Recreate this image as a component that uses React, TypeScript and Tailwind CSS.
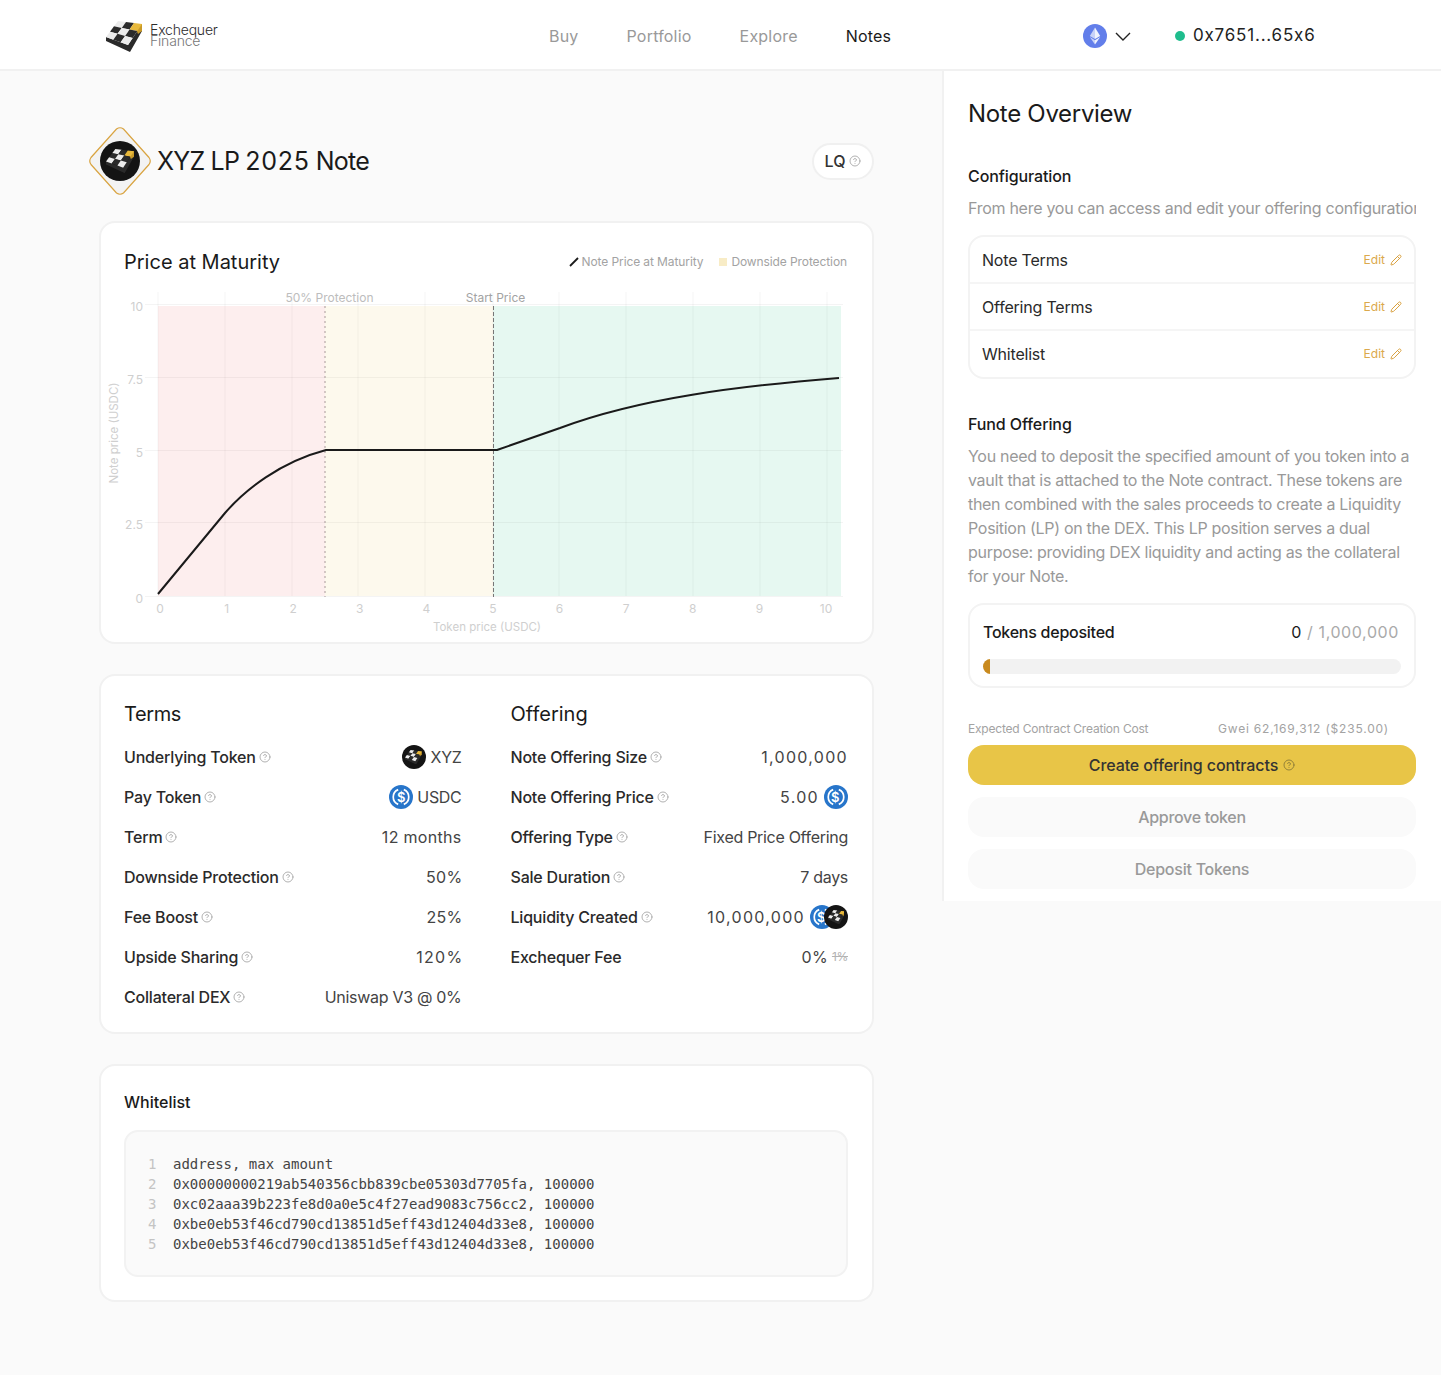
import { CircleHelp, Pencil } from "lucide-react";

const font = { fontFamily: "Inter, 'Liberation Sans', sans-serif" };

// board corners, then a 3x3 grid bent between them
const lerp = (a: number[], b: number[], t: number) => [a[0] + (b[0] - a[0]) * t, a[1] + (b[1] - a[1]) * t];
const T = [12, 0];
const R = [36, 3];
const L = [0, 16];
const F = [22, 24];
const pt = (u: number, v: number) => {
  const p = lerp(T, R, u);
  const q = lerp(L, F, u);
  return lerp(p, q, v).map((n) => n.toFixed(2)).join(",");
};

function Logo({ className }: { className?: string }) {
  const cells = [];
  for (let i = 0; i < 3; i++) {
    for (let j = 0; j < 3; j++) {
      const gold = i === 2 && j === 0;
      const fill = gold ? "#e8b93c" : (i + j) % 2 === 0 ? "#ececec" : "#2b2b2b";
      cells.push(
        <polygon
          key={`${i}${j}`}
          points={`${pt(i / 3, j / 3)} ${pt((i + 1) / 3, j / 3)} ${pt((i + 1) / 3, (j + 1) / 3)} ${pt(i / 3, (j + 1) / 3)}`}
          fill={fill}
        />
      );
    }
  }
  return (
    <svg viewBox="0 0 36 31" className={className}>
      <polygon points="0,16 22,24 36,3 36,10 24,31 0,20" fill="#2a2a2a" />
      <polygon points="28,3 36,3 36,10 32,13" fill="#c99a28" />
      {cells}
    </svg>
  );
}

function XyzToken({ className }: { className?: string }) {
  return (
    <span className={`flex shrink-0 items-center justify-center rounded-full bg-[#141414] ${className}`}>
      <Logo className="w-[70%]" />
    </span>
  );
}

function Usdc({ className }: { className?: string }) {
  return (
    <svg viewBox="0 0 24 24" className={className}>
      <circle cx="12" cy="12" r="12" fill="#2775ca" />
      <path d="M9.2 4.6a8 8 0 0 0 0 14.8M14.8 4.6a8 8 0 0 1 0 14.8" fill="none" stroke="#fff" strokeWidth="1.7" />
      <text x="12" y="16.5" textAnchor="middle" fontSize="13" fontWeight="600" fill="#fff" style={font}>$</text>
    </svg>
  );
}

function Help({ className = "" }: { className?: string }) {
  return <CircleHelp strokeWidth={1.8} className={`h-3 w-3 shrink-0 text-[#a8a8a8] ${className}`} />;
}

function Row({ label, help = true, num = false, children }: { label: string; help?: boolean; num?: boolean; children: React.ReactNode }) {
  return (
    <div className="flex h-10 items-center justify-between">
      <div className="flex items-center gap-[3px] text-[16px] font-medium tracking-[-0.2px] text-[#2a2a2a]">
        {label}
        {help && <Help />}
      </div>
      <div className={`flex items-center text-[16px] text-[#444444] ${num ? "tracking-[1.3px]" : "tracking-[-0.3px]"}`}>{children}</div>
    </div>
  );
}

function Chart() {
  const xs = [158, 225, 292, 358, 425, 493, 559, 626, 693, 760, 827];
  const ys = [
    [305, "10"],
    [378, "7.5"],
    [451, "5"],
    [523, "2.5"],
    [597, "0"],
  ] as const;
  return (
    <svg viewBox="101 284 770 356" className="mt-[9px] -ml-[23px] block w-[770px] max-w-none" style={font}>
      <rect x="158" y="306" width="167" height="290" fill="#fdeeee" />
      <rect x="325" y="306" width="168" height="290" fill="#fdf9ed" />
      <rect x="493" y="306" width="348" height="290" fill="#e6f8f1" />
      {xs.map((x) => (
        <line key={x} x1={x} x2={x} y1="292" y2="596" stroke="#000" strokeOpacity="0.045" />
      ))}
      {ys.map(([y]) => (
        <line key={y} x1="145" x2="843" y1={y - 0.5} y2={y - 0.5} stroke="#000" strokeOpacity="0.045" />
      ))}
      <line x1="325" x2="325" y1="306" y2="597" stroke="#a89a9a" strokeDasharray="2 3" />
      <line x1="493.5" x2="493.5" y1="306" y2="597" stroke="#777" strokeDasharray="4 2" />
      <path
        d="M158 594 L225 513 C245 490 280 462 326 450 L497 450 L560 428 C640 398 740 386 839 378"
        fill="none"
        stroke="#1a1a1a"
        strokeWidth="2"
        strokeLinejoin="round"
      />
      <g fontSize="12" fill="#cfcfcf">
        {ys.map(([y, t]) => (
          <text key={t} x="143" y={y + 6} textAnchor="end">{t}</text>
        ))}
        {xs.map((x, i) => (
          <text key={x} x={160 + i * 66.6} y="613" textAnchor="middle">{i}</text>
        ))}
        <text x="487" y="631" textAnchor="middle" fontSize="11.5">Token price (USDC)</text>
        <text transform="translate(118 433) rotate(-90)" textAnchor="middle" fontSize="11.5">Note price (USDC)</text>
        <text x="329.5" y="302" textAnchor="middle" fill="#bdbdbd">50% Protection</text>
        <text x="495.5" y="302" textAnchor="middle" fill="#a3a3a3">Start Price</text>
      </g>
    </svg>
  );
}

const codeLines = [
  "address, max amount",
  "0x00000000219ab540356cbb839cbe05303d7705fa, 100000",
  "0xc02aaa39b223fe8d0a0e5c4f27ead9083c756cc2, 100000",
  "0xbe0eb53f46cd790cd13851d5eff43d12404d33e8, 100000",
  "0xbe0eb53f46cd790cd13851d5eff43d12404d33e8, 100000",
];

export default function App() {
  return (
    <div className="min-h-[1375px] bg-[#fafafa] text-[#1a1a1a]" style={font}>
      {/* header */}
      <header className="flex h-[71px] items-center border-b-2 border-[#f1f1f1] bg-white pt-[3px]">
        <div className="flex w-[549px] items-center pl-[106px]">
          <Logo className="w-9" />
          <div className="ml-2 -mt-[2px] text-[14px] leading-[11px] font-light tracking-[-0.2px]">
            <div className="text-[#2c2c2c]">Exchequer</div>
            <div className="text-[#777777]">Finance</div>
          </div>
        </div>
        <nav className="flex w-[341px] gap-12 text-[16px] tracking-[0.2px] text-[#999999]">
          <span>Buy</span>
          <span>Portfolio</span>
          <span>Explore</span>
          <span className="text-[#1a1a1a]">Notes</span>
        </nav>
        <svg viewBox="0 0 24 24" className="ml-[193px] h-6 w-6">
          <circle cx="12" cy="12" r="12" fill="#627eea" />
          <polygon points="12,3.5 6.8,12 12,15" fill="#fff" fillOpacity="0.65" />
          <polygon points="12,3.5 17.2,12 12,15" fill="#fff" fillOpacity="0.9" />
          <polygon points="6.8,13 12,20.5 12,16.2" fill="#fff" fillOpacity="0.65" />
          <polygon points="17.2,13 12,20.5 12,16.2" fill="#fff" fillOpacity="0.9" />
        </svg>
        <svg viewBox="0 0 16 9" className="ml-2 h-[9px] w-4">
          <polyline points="1,1 8,8 15,1" fill="none" stroke="#222222" strokeWidth="1.4" />
        </svg>
        <span className="ml-[44px] h-[10px] w-[10px] rounded-full bg-[#1fbd8d]" />
        <span className="ml-2 text-[17px] tracking-[0.8px] text-[#222222]">0x7651...65x6</span>
      </header>

      <div className="flex items-start">
        {/* left column */}
        <main className="w-[942px] shrink-0 pl-[99px] pr-[68px] pt-[56px]">
          <div className="mb-[26px] flex h-[68px] items-center justify-between">
            <div className="-ml-[11px] flex items-center gap-[5px]">
              <span className="relative flex h-[68px] w-[64px] items-center justify-center">
                <svg viewBox="0 0 64 68" className="absolute inset-0">
                  <path
                    d="M28.5 2 Q32 -0.5 35.5 2 L61 30.5 Q63.5 34 61 37.5 L35.5 66 Q32 68.5 28.5 66 L3 37.5 Q0.5 34 3 30.5 Z"
                    fill="#f3f3f3"
                    stroke="#d9a441"
                    strokeWidth="1.2"
                  />
                </svg>
                <XyzToken className="relative h-10 w-10" />
              </span>
              <h1 className="mt-[2px] text-[25px] font-normal tracking-[-0.8px] text-[#1a1a1a]">
                XYZ LP <span className="tracking-[0.7px]">2025</span> Note
              </h1>
            </div>
            <div className="flex h-[37px] w-[62px] items-center justify-center gap-1 rounded-full border-2 border-[#f0f0f0] bg-white text-[16px] font-medium text-[#333333]">
              LQ <Help />
            </div>
          </div>

          <section className="h-[423px] rounded-[16px] border-2 border-[#f1f1f1] bg-white pl-[23px] pr-[24px] pt-[25px]">
            <div className="flex h-[27px] items-center justify-between">
              <h2 className="text-[20px] font-normal">Price at Maturity</h2>
              <div className="mr-px flex items-center text-[12px] tracking-[-0.1px] text-[#a3a3a3]">
                <svg viewBox="0 0 10 10" className="mr-[3px] h-[10px] w-[10px]">
                  <line x1="1" y1="9" x2="9" y2="1" stroke="#1a1a1a" strokeWidth="1.8" />
                </svg>
                Note Price at Maturity
                <span className="ml-4 mr-1 h-2 w-2 bg-[#f8ecc6]" />
                Downside Protection
              </div>
            </div>
            <Chart />
          </section>

          <section className="mt-[30px] grid h-[360px] grid-cols-2 gap-x-[49px] rounded-[16px] border-2 border-[#f1f1f1] bg-white pl-[23px] pr-[24px] pt-[23px]">
            <div>
              <h2 className="mb-2 h-[30px] text-[20px] leading-[30px] font-normal tracking-[-0.4px]">Terms</h2>
              <Row label="Underlying Token">
                <XyzToken className="mr-[5px] h-6 w-6" />
                XYZ
              </Row>
              <Row label="Pay Token">
                <Usdc className="mr-1 h-6 w-6" />
                USDC
              </Row>
              <Row label="Term"><span className="tracking-[0.3px]">12 months</span></Row>
              <Row label="Downside Protection"><span className="-mr-px tracking-[0.3px]">50%</span></Row>
              <Row label="Fee Boost"><span className="-mr-px tracking-[0.3px]">25%</span></Row>
              <Row label="Upside Sharing" num><span className="-mr-[2px]">120%</span></Row>
              <Row label="Collateral DEX">Uniswap V3 @ 0%</Row>
            </div>
            <div>
              <h2 className="mb-2 h-[30px] text-[20px] leading-[30px] font-normal">Offering</h2>
              <Row label="Note Offering Size" num>1,000,000</Row>
              <Row label="Note Offering Price" num>
                5.00
                <Usdc className="ml-[5px] h-6 w-6" />
              </Row>
              <Row label="Offering Type">Fixed Price Offering</Row>
              <Row label="Sale Duration">7 days</Row>
              <Row label="Liquidity Created" num>
                10,000,000
                <Usdc className="ml-[5px] h-6 w-6" />
                <XyzToken className="-ml-[10px] relative h-6 w-6" />
              </Row>
              <Row label="Exchequer Fee" help={false}>
                <span className="tracking-[0.3px]">0%</span>
                <span className="ml-1 text-[12px] text-[#b3b3b3] line-through">1%</span>
              </Row>
            </div>
          </section>

          <section className="mt-[30px] h-[238px] rounded-[16px] border-2 border-[#f1f1f1] bg-white pl-[23px] pr-[24px] pt-[24px]">
            <h3 className="h-[24px] text-[16px] leading-[24px] font-medium">Whitelist</h3>
            <div className="mt-[16px] h-[147px] rounded-[14px] border-2 border-[#f2f2f2] bg-[#fafafa] pl-[22px] pt-[22px] text-[14px] leading-[20px] text-[#444444]" style={{ fontFamily: "'DejaVu Sans Mono', monospace" }}>
              {codeLines.map((l, i) => (
                <div key={i} className="flex">
                  <span className="w-[25px] text-[#c4c4c4]">{i + 1}</span>
                  <span className="whitespace-pre">{l}</span>
                </div>
              ))}
            </div>
          </section>
        </main>

        {/* right panel */}
        <aside className="h-[830px] w-[499px] border-l-2 border-[#f1f1f1] bg-white pl-6 pr-[25px]">
          <h2 className="mt-[27px] h-[32px] text-[24px] leading-[32px] font-normal tracking-[-0.3px]">Note Overview</h2>

          <h3 className="mt-[34px] h-[24px] text-[16px] leading-[24px] font-medium tracking-[-0.1px]">Configuration</h3>
          <p className="mt-2 h-6 overflow-hidden whitespace-nowrap text-[16px] leading-[24px] tracking-[-0.28px] text-[#999999]">
            From here you can access and edit your offering configuration
          </p>

          <div className="mt-[15px] rounded-[16px] border-2 border-[#f3f3f3]">
            {["Note Terms", "Offering Terms", "Whitelist"].map((t, i) => (
              <div key={t} className={`flex items-center justify-between pl-3 pr-3 text-[16px] tracking-[-0.2px] text-[#2a2a2a] ${i === 0 ? "h-[45px]" : i === 1 ? "h-[47px] border-t-2 border-[#f5f5f5]" : "h-[48px] border-t-2 border-[#f5f5f5]"}`}>
                {t}
                <span className="flex items-center gap-[5px] text-[12px] tracking-normal text-[#dba94c]">
                  Edit <Pencil strokeWidth={2} className="h-3 w-3 text-[#d9a13f]" />
                </span>
              </div>
            ))}
          </div>

          <h3 className="mt-[33px] h-[24px] text-[16px] leading-[24px] font-medium tracking-[-0.1px]">Fund Offering</h3>
          <p className="mt-2 text-[16px] leading-[24px] tracking-[-0.3px] text-[#999999]">
            You need to deposit the specified amount of you token into a vault that is attached to the Note contract. These tokens are then combined with the sales proceeds to create a Liquidity Position (LP) on the DEX. This LP position serves a dual purpose: providing DEX liquidity and acting as the collateral for your Note.
          </p>

          <div className="mt-[15px] h-[85px] rounded-[16px] border-2 border-[#f3f3f3] px-[13px] pt-[15px]">
            <div className="flex h-6 items-center justify-between text-[16px] font-medium tracking-[-0.25px]">
              Tokens deposited
              <span className="pr-[2px] font-normal tracking-[0.6px] text-[#aaaaaa]">
                <span className="text-[#1a1a1a]">0</span> / 1,000,000
              </span>
            </div>
            <div className="mt-[15px] h-[15px] overflow-hidden rounded-full bg-[#f2f2f2]">
              <div className="h-full w-[7px] bg-[#c98a1e]" />
            </div>
          </div>

          <div className="mt-[33px] flex h-[16px] items-center text-[12px] text-[#a3a3a3]">
            <span className="w-[250px] tracking-[-0.2px]">Expected Contract Creation Cost</span>
            <span className="tracking-[0.8px]">Gwei 62,169,312 ($235.00)</span>
          </div>
          <button className="mt-2 flex h-10 w-full items-center justify-center gap-[5px] rounded-[16px] bg-[#e8c547] text-[16px] font-medium tracking-[-0.1px] text-[#333333]">
            Create offering contracts <CircleHelp strokeWidth={1.8} className="h-3 w-3 text-[#8a7a38]" />
          </button>
          <button className="mt-3 h-10 w-full rounded-[16px] bg-[#fafafa] text-[16px] font-medium tracking-[-0.3px] text-[#999999]">Approve token</button>
          <button className="mt-3 h-10 w-full rounded-[16px] bg-[#fafafa] text-[16px] font-medium tracking-[-0.25px] text-[#999999]">Deposit Tokens</button>
        </aside>
      </div>
    </div>
  );
}
